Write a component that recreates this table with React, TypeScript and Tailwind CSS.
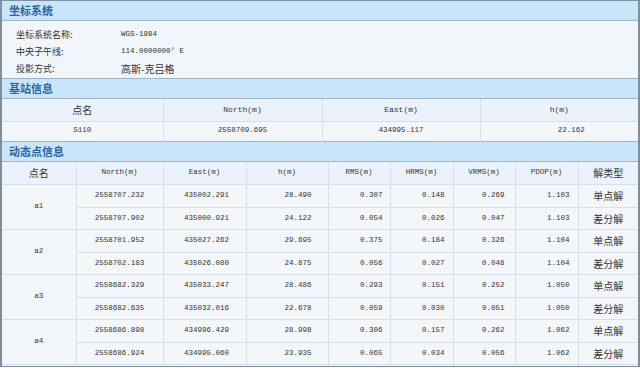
import React from 'react';

const cn = '"Noto Sans CJK SC", "Noto Sans", sans-serif';
const mono = '"Liberation Mono", "DejaVu Sans Mono", monospace';

const points = [
  {
    name: 'a1',
    rows: [
      ['2558707.232', '435002.291', '28.490', '0.307', '0.148', '0.269', '1.103', '单点解'],
      ['2558707.902', '435000.921', '24.122', '0.054', '0.026', '0.047', '1.103', '差分解'],
    ],
  },
  {
    name: 'a2',
    rows: [
      ['2558701.952', '435027.262', '29.695', '0.375', '0.184', '0.326', '1.104', '单点解'],
      ['2558702.183', '435026.080', '24.875', '0.056', '0.027', '0.048', '1.104', '差分解'],
    ],
  },
  {
    name: 'a3',
    rows: [
      ['2558682.329', '435033.247', '28.486', '0.293', '0.151', '0.252', '1.050', '单点解'],
      ['2558682.635', '435032.016', '22.678', '0.059', '0.030', '0.051', '1.050', '差分解'],
    ],
  },
  {
    name: 'a4',
    rows: [
      ['2558686.898', '434996.429', '28.998', '0.306', '0.157', '0.262', '1.062', '单点解'],
      ['2558686.924', '434995.060', '23.935', '0.065', '0.034', '0.056', '1.062', '差分解'],
    ],
  },
];

function SectionTitle({ title }: { title: string }) {
  return (
    <div
      className="h-[20px] flex items-center pl-[7px] bg-[#c9e5f9] border-b border-[#9fb4c7] text-[11px] font-bold text-[#2a62a6]"
      style={{ fontFamily: cn }}
    >
      {title}
    </div>
  );
}

export default function App() {
  const cell = 'border-r border-b border-[#d6e0ea]';
  return (
    <div className="w-[640px] h-[368px] overflow-hidden bg-white">
      <div className="w-[640px] h-[367px] border-l-2 border-t border-r-2 border-b border-[#7c8ea0] bg-[#f1f6fb] text-[#333]">
        <SectionTitle title="坐标系统" />
        <div className="h-[58px] pt-[5px] pl-[14px] text-[9px] border-b border-[#9fb4c7]" style={{ fontFamily: cn }}>
          <div className="flex h-[17px] items-center">
            <span className="w-[105px]">坐标系统名称:</span>
            <span className="text-[7.5px]" style={{ fontFamily: mono }}>WGS-1984</span>
          </div>
          <div className="flex h-[17px] items-center">
            <span className="w-[105px]">中央子午线:</span>
            <span className="text-[7.5px]" style={{ fontFamily: mono }}>114.0000000° E</span>
          </div>
          <div className="flex h-[17px] items-center">
            <span className="w-[105px]">投影方式:</span>
            <span className="text-[10px]">高斯-克吕格</span>
          </div>
        </div>

        <SectionTitle title="基站信息" />
        <table className="w-full border-collapse table-fixed border-b border-[#9fb4c7]">
          <colgroup>
            <col className="w-[161px]" />
            <col className="w-[159px]" />
            <col className="w-[158px]" />
            <col />
          </colgroup>
          <tbody>
            <tr className="h-[22px] bg-[#eaf3fb]">
              <td className={`${cell} text-center text-[10px]`} style={{ fontFamily: cn }}>点名</td>
              <td className={`${cell} text-center text-[8px]`} style={{ fontFamily: mono }}>North(m)</td>
              <td className={`${cell} text-center text-[8px]`} style={{ fontFamily: mono }}>East(m)</td>
              <td className={`border-b border-[#d6e0ea] text-center text-[8px]`} style={{ fontFamily: mono }}>h(m)</td>
            </tr>
            <tr className="h-[20px] bg-[#f4f7fa]">
              <td className="border-r border-[#d6e0ea] text-center text-[7.5px]" style={{ fontFamily: mono }}>S110</td>
              <td className="border-r border-[#d6e0ea] text-center text-[7.5px]" style={{ fontFamily: mono }}>2558709.695</td>
              <td className="border-r border-[#d6e0ea] text-center text-[7.5px]" style={{ fontFamily: mono }}>434995.117</td>
              <td className="text-center pl-[24px] text-[7.5px]" style={{ fontFamily: mono }}>22.162</td>
            </tr>
          </tbody>
        </table>

        <SectionTitle title="动态点信息" />
        <table className="w-full border-collapse table-fixed">
          <colgroup>
            <col className="w-[74px]" />
            <col className="w-[87px]" />
            <col className="w-[83px]" />
            <col className="w-[82px]" />
            <col className="w-[62px]" />
            <col className="w-[63px]" />
            <col className="w-[62px]" />
            <col className="w-[63px]" />
            <col />
          </colgroup>
          <thead>
            <tr className="h-[23px] bg-[#eaf3fb]">
              <th className={`${cell} font-normal text-[10px]`} style={{ fontFamily: cn }}>点名</th>
              {['North(m)', 'East(m)', 'h(m)', 'RMS(m)', 'HRMS(m)', 'VRMS(m)', 'PDOP(m)'].map((h) => (
                <th key={h} className={`${cell} font-normal text-[7.5px]`} style={{ fontFamily: mono }}>{h}</th>
              ))}
              <th className="border-b border-[#d6e0ea] font-normal text-[10px]" style={{ fontFamily: cn }}>解类型</th>
            </tr>
          </thead>
          <tbody>
            {points.map((p) =>
              p.rows.map((r, i) => (
                <tr key={p.name + i} className="h-[22.5px] bg-[#f4f7fa] text-[7.5px]" style={{ fontFamily: mono }}>
                  {i === 0 && (
                    <td rowSpan={2} className={`${cell} text-center`}>{p.name}</td>
                  )}
                  <td className={`${cell} text-center`}>{r[0]}</td>
                  <td className={`${cell} text-center pl-[4px]`}>{r[1]}</td>
                  <td className={`${cell} text-right pr-[16px]`}>{r[2]}</td>
                  <td className={`${cell} text-right pr-[7px]`}>{r[3]}</td>
                  <td className={`${cell} text-right pr-[8px]`}>{r[4]}</td>
                  <td className={`${cell} text-right pr-[10px]`}>{r[5]}</td>
                  <td className={`${cell} text-right pr-[8px]`}>{r[6]}</td>
                  <td className="border-b border-[#d6e0ea] text-center text-[10px]" style={{ fontFamily: cn }}>{r[7]}</td>
                </tr>
              ))
            )}
          </tbody>
        </table>
      </div>
    </div>
  );
}
